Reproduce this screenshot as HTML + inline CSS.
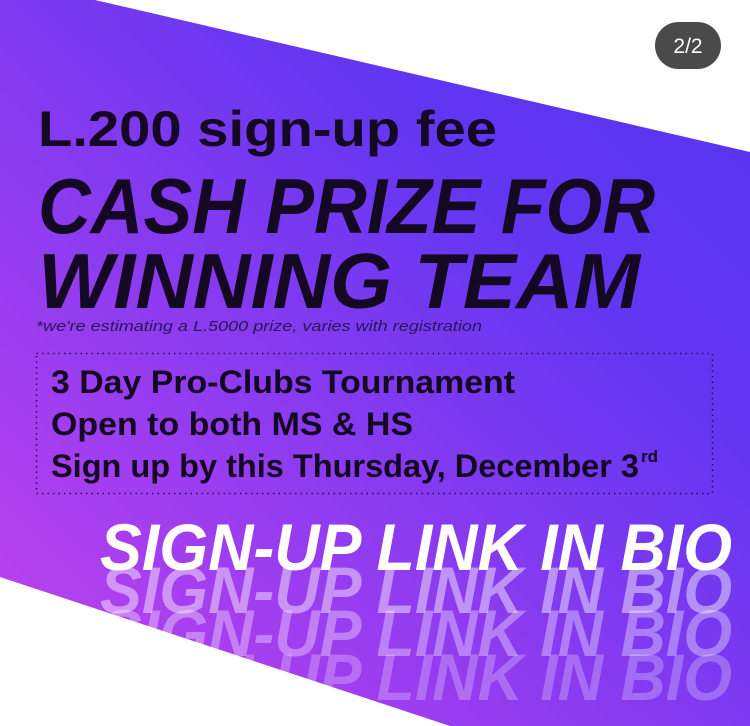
<!DOCTYPE html>
<html><head><meta charset="utf-8"><style>
html,body{margin:0;padding:0;width:750px;height:726px;overflow:hidden;background:#fff}
svg{display:block}
</style></head><body>
<svg width="750" height="726" viewBox="0 0 750 726" xmlns="http://www.w3.org/2000/svg">
<defs>
<linearGradient id="g" x1="1" y1="0" x2="0" y2="1">
<stop offset="0" stop-color="#5334f3"/>
<stop offset="0.3" stop-color="#6236f2"/>
<stop offset="1" stop-color="#c442ee"/>
</linearGradient>
</defs>
<rect width="750" height="726" fill="url(#g)"/>
<g font-family="Liberation Sans, sans-serif" font-weight="bold" font-style="italic" fill="#fff">
<text x="100" y="613" font-size="66" textLength="632" lengthAdjust="spacingAndGlyphs" opacity="0.45">SIGN-UP LINK IN BIO</text>
<text x="100" y="656" font-size="66" textLength="632" lengthAdjust="spacingAndGlyphs" opacity="0.35">SIGN-UP LINK IN BIO</text>
<text x="100" y="700" font-size="66" textLength="632" lengthAdjust="spacingAndGlyphs" opacity="0.25">SIGN-UP LINK IN BIO</text>
</g>
<polygon points="95,0 750,0 750,152" fill="#fff"/>
<polygon points="0,577 450,726 0,726" fill="#fff"/>
<g font-family="Liberation Sans, sans-serif" fill="#150822">
<text x="38" y="146" font-size="50" font-weight="bold" textLength="459" lengthAdjust="spacingAndGlyphs">L.200 sign-up fee</text>
<text x="38" y="233" font-size="78" font-weight="bold" font-style="italic" textLength="617" lengthAdjust="spacingAndGlyphs">CASH PRIZE FOR</text>
<text x="38" y="308" font-size="78" font-weight="bold" font-style="italic" textLength="602" lengthAdjust="spacingAndGlyphs">WINNING TEAM</text>
<text x="36" y="331" font-size="15" font-style="italic" fill="#2a1656" textLength="446" lengthAdjust="spacingAndGlyphs">*we're estimating a L.5000 prize, varies with registration</text>
<text x="51" y="393" font-size="32" font-weight="bold" textLength="464" lengthAdjust="spacingAndGlyphs">3 Day Pro-Clubs Tournament</text>
<text x="51" y="435" font-size="32" font-weight="bold" textLength="362" lengthAdjust="spacingAndGlyphs">Open to both MS &amp; HS</text>
<text x="51" y="477" font-size="32" font-weight="bold" textLength="588" lengthAdjust="spacingAndGlyphs">Sign up by this Thursday, December 3</text>
<text x="641" y="462" font-size="17" font-weight="bold">rd</text>
</g>
<rect x="36.5" y="353.5" width="676" height="140" fill="none" stroke="#2a1050" stroke-width="1.5" stroke-dasharray="1.5 4"/>
<text x="100" y="570" font-family="Liberation Sans, sans-serif" font-weight="bold" font-style="italic" font-size="66" fill="#fff" textLength="632" lengthAdjust="spacingAndGlyphs">SIGN-UP LINK IN BIO</text>
<rect x="655" y="22" width="66" height="47" rx="23.5" fill="#4a4a4a"/>
<text x="688" y="53" text-anchor="middle" font-family="Liberation Sans, sans-serif" font-size="21" fill="#fff">2/2</text>
</svg>
</body></html>
